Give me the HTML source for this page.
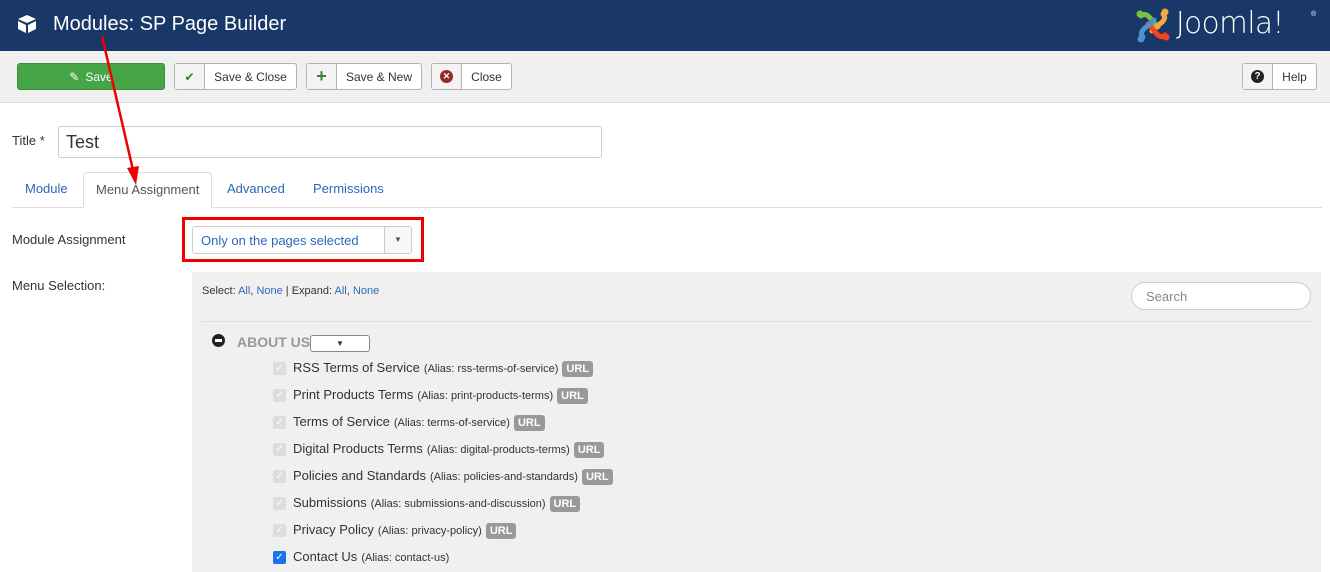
<!DOCTYPE html><html><head><style>
*{box-sizing:border-box;margin:0;padding:0}
body{width:1330px;height:570px;overflow:hidden;background:#fff;font-family:"Liberation Sans",sans-serif;font-size:13px;color:#333;position:relative}
.abs{position:absolute}
.hdr{left:0;top:0;width:1330px;height:51px;background:#1a3867}
.tb{left:0;top:51px;width:1330px;height:52px;background:#f0f0f0;border-bottom:1px solid #ddd}
.btn{position:absolute;top:63px;height:27px;border:1px solid #b3b3b3;border-radius:3px;background:#fff;display:flex;font-size:12px;color:#333}
.btn .ic{width:30px;background:#f3f3f3;border-right:1px solid #b3b3b3;display:flex;align-items:center;justify-content:center}
.btn .t{flex:1;display:flex;align-items:center;justify-content:center}
.tab{position:absolute;top:172px;height:36px;line-height:34px;font-size:13px;color:#2a69b8;padding:0 12px;white-space:nowrap}
.item{position:absolute;left:273px;font-size:13px;color:#333;display:flex;align-items:baseline;height:16px;white-space:nowrap}
.cb{width:13px;height:13px;background:#ddd;border-radius:2px;margin-right:7px;display:inline-flex;align-items:center;justify-content:center;color:#fff;font-size:10px;align-self:center}
.al{font-size:11px;margin-left:4px}
.url{background:#999;color:#fff;font-weight:bold;font-size:11px;padding:2px 4px;border-radius:3px;margin-left:4px}
a{color:#2a69b8;text-decoration:none}
</style></head><body>
<div class="abs hdr"></div>
<svg class="abs" style="left:17px;top:14px" width="20" height="20" viewBox="0 0 20 20"><path d="M10 1 L19 5 L10 9 L1 5Z" fill="#fff"/><path d="M1 7 L9 11 V19 L1 15Z M19 7 L11 11 V19 L19 15Z" fill="#fff"/></svg>
<div class="abs" style="left:53px;top:13px;color:#fff;font-size:20px">Modules: SP Page Builder</div>
<svg class="abs" style="left:1134px;top:7px" width="38" height="37" viewBox="0 0 38 37"><g stroke-width="5" stroke-linecap="round" fill="none"><path d="M7 9 C12 4 17 12 20 16 L24 20" stroke="#7ac143"/><path d="M29 7 C34 12 26 17 22 20 L18 24" stroke="#f9a541"/><path d="M31 28 C26 33 21 25 18 21 L14 17" stroke="#f44321"/><path d="M9 30 C4 25 12 20 16 17 L20 13" stroke="#5091cd"/></g><circle cx="6" cy="7" r="3.5" fill="#7ac143"/><circle cx="31" cy="5" r="3.5" fill="#f9a541"/><circle cx="32" cy="30" r="3.5" fill="#f44321"/><circle cx="7" cy="32" r="3.5" fill="#5091cd"/></svg>
<div class="abs" style="left:1176px;top:6px;color:#fff;font-size:30px;font-family:'DejaVu Sans',sans-serif;font-weight:200;letter-spacing:-0.5px;transform:scaleX(0.98);transform-origin:left">Joomla!</div>
<div class="abs" style="left:1311px;top:11px;color:#fff;font-size:7px">®</div>
<div class="abs tb"></div>
<div class="btn" style="left:17px;width:148px;background:#46a546;border-color:#3d8b3d;color:#fff;justify-content:center;align-items:center"><span style="margin-right:6px">&#9998;</span>Save</div>
<div class="btn" style="left:174px;width:123px"><div class="ic" style="color:#378137">&#10004;</div><div class="t">Save &amp; Close</div></div>
<div class="btn" style="left:306px;width:116px"><div class="ic" style="color:#378137;font-weight:bold;font-size:18px">+</div><div class="t">Save &amp; New</div></div>
<div class="btn" style="left:431px;width:81px"><div class="ic"><span style="width:13px;height:13px;border-radius:50%;background:#942a25;color:#fff;font-size:9px;line-height:13px;text-align:center;font-weight:bold">✕</span></div><div class="t">Close</div></div>
<div class="btn" style="left:1242px;width:75px"><div class="ic"><span style="width:13px;height:13px;border-radius:50%;background:#222;color:#fff;font-size:10px;line-height:13px;text-align:center;font-weight:bold">?</span></div><div class="t">Help</div></div>
<div class="abs" style="left:12px;top:133px;font-size:13px">Title *</div>
<div class="abs" style="left:58px;top:126px;width:544px;height:32px;border:1px solid #ccc;border-radius:3px;font-size:18px;padding:5px 7px">Test</div>
<div class="abs" style="left:12px;top:207px;width:1310px;border-top:1px solid #ddd"></div>
<div class="tab" style="left:13px">Module</div>
<div class="tab" style="left:83px;width:129px;border:1px solid #ddd;border-bottom-color:#fff;background:#fff;color:#555;border-radius:4px 4px 0 0">Menu Assignment</div>
<div class="tab" style="left:215px">Advanced</div>
<div class="tab" style="left:301px">Permissions</div>
<div class="abs" style="left:12px;top:232px">Module Assignment</div>
<div class="abs" style="left:182px;top:217px;width:242px;height:45px;border:3px solid #e00"></div>
<div class="abs" style="left:192px;top:226px;width:220px;height:28px;border:1px solid #ccc;border-radius:3px;color:#2a69b8;padding:6px 8px;font-size:13px">Only on the pages selected</div>
<div class="abs" style="left:384px;top:227px;width:27px;height:26px;border-left:1px solid #ccc;background:#f7f7f7;text-align:center;font-size:8px;line-height:26px;color:#555">▼</div>
<div class="abs" style="left:12px;top:278px">Menu Selection:</div>
<div class="abs" style="left:192px;top:272px;width:1129px;height:300px;background:#f0f0f0"></div>
<div class="abs" style="left:202px;top:285px;font-size:11px">Select: <a>All</a>, <a>None</a> | Expand: <a>All</a>, <a>None</a></div>
<div class="abs" style="left:1131px;top:282px;width:180px;height:28px;border:1px solid #ccc;border-radius:14px;background:#fff;color:#888;padding:6px 14px;font-size:13px">Search</div>
<div class="abs" style="left:202px;top:321px;width:1110px;border-top:1px solid #ddd"></div>
<div class="abs" style="left:212px;top:334px;width:13px;height:13px;border-radius:50%;background:#222"><div style="margin:5px 3px;height:3px;background:#fff"></div></div>
<div class="abs" style="left:237px;top:334px;font-weight:bold;color:#999;font-size:14px">ABOUT US</div>
<div class="abs" style="left:310px;top:335px;width:60px;height:17px;border:1px solid #888;border-radius:3px;background:#fff;text-align:center;font-size:8px;line-height:15px">▼</div>
<div class="item" style="top:360px"><span class="cb">✓</span>RSS Terms of Service<span class="al">(Alias: rss-terms-of-service)</span><span class="url">URL</span></div>
<div class="item" style="top:387px"><span class="cb">✓</span>Print Products Terms<span class="al">(Alias: print-products-terms)</span><span class="url">URL</span></div>
<div class="item" style="top:414px"><span class="cb">✓</span>Terms of Service<span class="al">(Alias: terms-of-service)</span><span class="url">URL</span></div>
<div class="item" style="top:441px"><span class="cb">✓</span>Digital Products Terms<span class="al">(Alias: digital-products-terms)</span><span class="url">URL</span></div>
<div class="item" style="top:468px"><span class="cb">✓</span>Policies and Standards<span class="al">(Alias: policies-and-standards)</span><span class="url">URL</span></div>
<div class="item" style="top:495px"><span class="cb">✓</span>Submissions<span class="al">(Alias: submissions-and-discussion)</span><span class="url">URL</span></div>
<div class="item" style="top:522px"><span class="cb">✓</span>Privacy Policy<span class="al">(Alias: privacy-policy)</span><span class="url">URL</span></div>
<div class="item" style="top:549px"><span class="cb" style="background:#1a73e8">✓</span>Contact Us<span class="al">(Alias: contact-us)</span></div>
<svg class="abs" style="left:0;top:0" width="300" height="200"><line x1="102" y1="36" x2="133" y2="170" stroke="#e00" stroke-width="2.5"/><path d="M127 168 L136 185 L139 166Z" fill="#e00"/></svg>
</body></html>
